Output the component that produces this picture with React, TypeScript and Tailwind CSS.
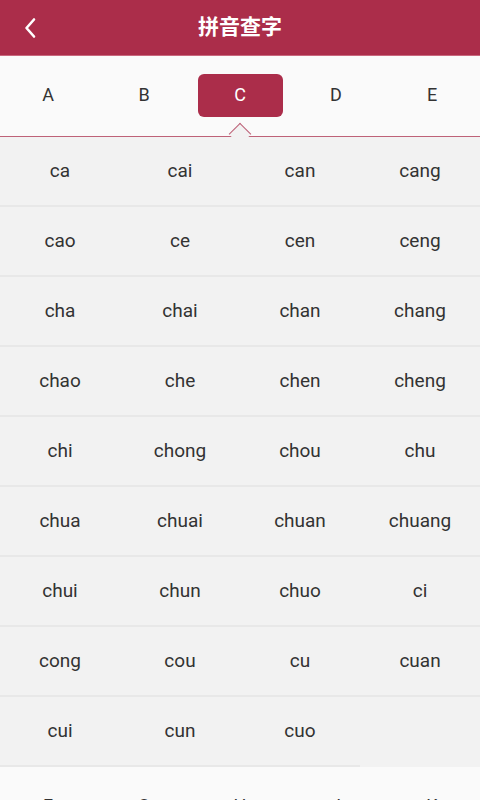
import React, { useState } from "react";

const sections: { letter: string; syllables: string[] }[] = [
  {
    letter: "C",
    syllables: [
      "ca", "cai", "can", "cang",
      "cao", "ce", "cen", "ceng",
      "cha", "chai", "chan", "chang",
      "chao", "che", "chen", "cheng",
      "chi", "chong", "chou", "chu",
      "chua", "chuai", "chuan", "chuang",
      "chui", "chun", "chuo", "ci",
      "cong", "cou", "cu", "cuan",
      "cui", "cun", "cuo",
    ],
  },
];

function LetterStrip({
  letters,
  active,
  onPick,
}: {
  letters: string[];
  active?: string;
  onPick?: (l: string) => void;
}) {
  return (
    <div className="relative shrink-0 h-[81px] bg-[#fafafa] border-b border-[#be6278] grid grid-cols-5 items-start pt-[18px]">
      {letters.map((l) => (
        <div key={l} className="relative flex justify-center">
          <button
            onClick={() => onPick?.(l)}
            className={
              l === active
                ? "w-[85px] h-[43px] rounded-[6px] bg-[#ab2d4a] text-white text-[18px] leading-none pb-[2px]"
                : "w-[85px] h-[43px] text-[#333333] text-[18px] leading-none pb-[2px]"
            }
          >
            {l}
          </button>
          {l === active && (
            <span className="absolute left-1/2 top-[52px] -ml-[8px] w-[16px] h-[16px] rotate-45 bg-[#f2f2f2] border-t border-l border-[#be6278]" />
          )}
        </div>
      ))}
    </div>
  );
}

export default function App() {
  const [active, setActive] = useState("C");
  const rows: string[][] = [];
  const list = sections[0].syllables;
  for (let i = 0; i < list.length; i += 4) rows.push(list.slice(i, i + 4));

  return (
    <div
      className="w-[480px] h-[800px] overflow-hidden bg-[#fafafa] flex flex-col"
      style={{ fontFamily: "Roboto, 'Noto Sans CJK SC', sans-serif" }}
    >
      {/* header */}
      <div className="h-[56px] shrink-0 bg-[#ab2d4a] border-b border-[#c9677d] flex items-center relative">
        <button className="w-[60px] h-full flex items-center justify-center">
          <svg width="14" height="22" viewBox="0 0 14 22">
            <path d="M11 2.5 L3.5 11 L11 19.5" fill="none" stroke="white" strokeWidth="2.6" strokeLinecap="round" strokeLinejoin="round" />
          </svg>
        </button>
        <div className="absolute inset-x-0 text-center text-white text-[21px] font-bold pointer-events-none">
          拼音查字
        </div>
      </div>

      <LetterStrip letters={["A", "B", "C", "D", "E"]} active={active} onPick={setActive} />

      {/* syllables */}
      <div className="shrink-0 bg-[#f2f2f2]">
        {rows.map((row, r) => (
          <div key={r} className="grid grid-cols-4">
            {[0, 1, 2, 3].map((c) => (
              <div
                key={c}
                className={
                  row[c]
                    ? "h-[70px] flex items-center justify-center text-[19px] text-[#333333] border-b-2 border-[#e8e8e8]"
                    : "h-[70px]"
                }
              >
                {row[c]}
              </div>
            ))}
          </div>
        ))}
      </div>

      <LetterStrip letters={["F", "G", "H", "J", "K"]} />
    </div>
  );
}
